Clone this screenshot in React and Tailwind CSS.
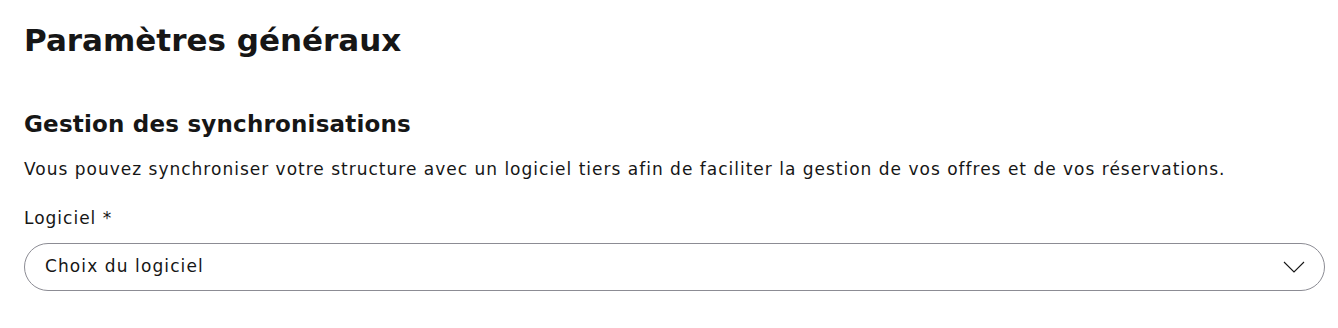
import React from "react";

export default function App() {
  return (
    <div className="min-h-screen bg-white pl-6 pr-[13px] pt-[20px] text-[#161616]" style={{ fontFamily: "'DejaVu Sans', sans-serif" }}>
      <h1 className="text-[31px] font-bold leading-[40px]">Paramètres généraux</h1>
      <section className="mt-[48px]">
        <h2 className="text-[23px] font-bold leading-[32px] tracking-[0.2px]">Gestion des synchronisations</h2>
        <p className="mt-[17px] text-[17px] leading-[24px] tracking-[1px]">
          Vous pouvez synchroniser votre structure avec un logiciel tiers afin de faciliter la gestion de vos offres et de vos réservations.
        </p>
        <label className="mt-[25px] block text-[17px] leading-[24px] tracking-[1px]">Logiciel *</label>
        <div className="mt-[13px] flex h-[48px] items-center justify-between rounded-full border border-[#8c8c94] pl-5 pr-[19px]">
          <span className="text-[17px] tracking-[1.1px]">Choix du logiciel</span>
          <svg width="22" height="12" viewBox="0 0 22 12" fill="none" stroke="#161616" strokeWidth="1.1">
            <path d="M1 1l10 10L21 1" />
          </svg>
        </div>
      </section>
    </div>
  );
}
